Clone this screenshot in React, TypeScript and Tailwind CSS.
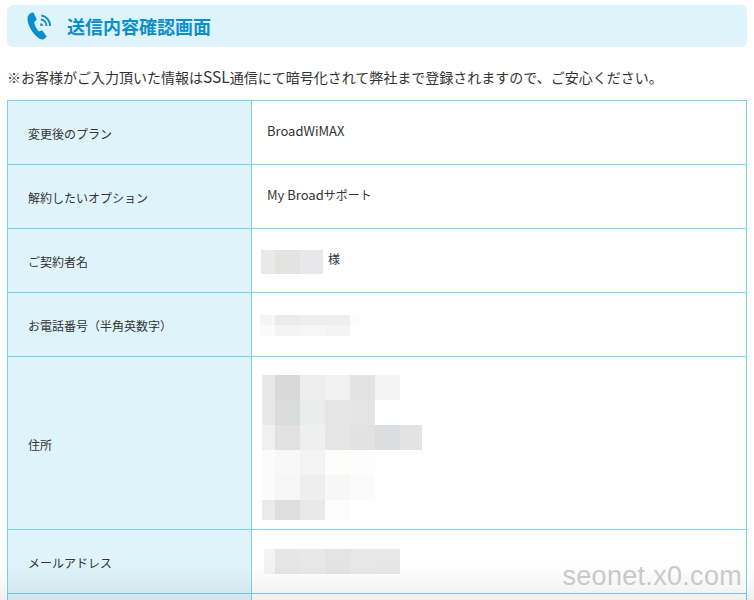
function Mosaic({ rows }: { rows: { h: number; cells: [number, string][] }[] }) {
  return (
    <div className="flex flex-col">
      {rows.map((r, i) => (
        <div key={i} className="flex" style={{ height: r.h }}>
          {r.cells.map(([w, c], j) => <div key={j} style={{ width: w, background: c }} />)}
        </div>
      ))}
    </div>
  );
}

function Row({ label, h, children }: { label: string; h: string; children: React.ReactNode }) {
  return (
    <div className={`flex border-b border-[#7ad2f0] ${h}`}>
      <div className="w-[244px] shrink-0 bg-[#dff3fb] border-r border-[#7ad2f0] flex items-center pl-5 pt-[3px] text-[12px] text-[#333]">{label}</div>
      <div className="flex-1 bg-white flex items-center text-[12px] text-[#333]">{children}</div>
    </div>
  );
}

export default function App() {
  return (
    <div className="relative w-[754px] h-[600px] overflow-hidden bg-white pt-[5px] px-[7px] font-['Noto_Sans_CJK_JP','Liberation_Sans',sans-serif]">
      <div className="h-[42px] rounded-[6px] bg-[#dff3fb] flex items-center pl-[20px]">
        <svg width="24" height="28" viewBox="0 0 24 28" fill="none">
          <path d="M0.5 6 C0.5 3.5 2.5 1.5 4.5 0.8 L6.3 0.3 L9.8 7.5 L7.3 10 C7 11.5 9 16.5 12 19.5 L15 18.2 L19.8 24.5 L17.5 26.8 C16 28 13.5 27.6 11.5 26 C5 21 0.2 12.5 0.5 6 Z" fill="#0a8fce" />
          <path d="M13.5 11 A3 3 0 0 1 16 14 L13.2 13.8 Z" fill="#0a8fce" />
          <path d="M13.8 7.5 A6.5 6.5 0 0 1 19.5 14 M14.3 3.5 A10 10 0 0 1 23 14" stroke="#0a8fce" strokeWidth="1.9" />
        </svg>
        <h1 className="ml-[16px] text-[18px] leading-[24px] font-bold text-[#0a8fce]">送信内容確認画面</h1>
      </div>
      <p className="mt-[21px] h-[32px] text-[14px] leading-[16px] text-[#333] whitespace-nowrap">※お客様がご入力頂いた情報は<span className="text-[15.5px]">SSL</span>通信にて暗号化されて弊社まで登録されますので、ご安心ください。</p>
      <div className="border border-b-0 border-[#7ad2f0]">
        <Row label="変更後のプラン" h="h-[64px]"><span className="ml-[15px] mb-[4px] text-[13px]">BroadWiMAX</span></Row>
        <Row label="解約したいオプション" h="h-[64px]"><span className="ml-[15px] mb-[4px]"><span className="text-[13px]">My Broad</span>サポート</span></Row>
        <Row label="ご契約者名" h="h-[64px]">
          <div className="ml-[9px] mt-[3px] flex items-center">
            <Mosaic rows={[{ h: 24, cells: [[14, "#e9e9e8"], [25, "#e3e3e1"], [23, "#e8e8ea"]] }]} />
            <span className="ml-[5px] mb-[6px]">様</span>
          </div>
        </Row>
        <Row label="お電話番号（半角英数字）" h="h-[64px]">
          <div className="ml-[8px] mt-[2px]">
            <Mosaic rows={[
              { h: 10, cells: [[15, "#f5f5f5"], [25, "#ebebeb"], [25, "#eeeeee"], [25, "#eeeeee"], [10, "#fcfcfc"]] },
              { h: 11, cells: [[15, "#fafafa"], [25, "#f4f4f4"], [25, "#f6f6f6"], [25, "#f3f3f3"]] },
            ]} />
          </div>
        </Row>
        <Row label="住所" h="h-[173px]">
          <div className="ml-[10px] mt-[9px]">
            <Mosaic rows={[
              { h: 25, cells: [[13, "#e8e8e7"], [25, "#d9d9db"], [25, "#eeeeee"], [25, "#f2f2f2"], [25, "#e3e3e3"], [25, "#f4f4f4"]] },
              { h: 25, cells: [[13, "#e8e8e6"], [25, "#dadbdd"], [25, "#ebeded"], [25, "#e6e6e6"], [25, "#e5e5e6"]] },
              { h: 25, cells: [[13, "#f0f0f0"], [25, "#e0e2e1"], [25, "#efefef"], [25, "#e6e6e6"], [25, "#e2e2e3"], [25, "#dcdddf"], [22, "#e3e3e3"]] },
              { h: 25, cells: [[13, "#fbfbfb"], [25, "#f8f8f8"], [25, "#f3f3f3"], [25, "#fdfdfb"], [25, "#fdfdfd"]] },
              { h: 25, cells: [[13, "#fbfbfb"], [25, "#f6f6f6"], [25, "#eeeeee"], [25, "#f7f7f7"], [25, "#fbfbfb"]] },
              { h: 20, cells: [[13, "#ebe9ea"], [25, "#dedede"], [25, "#e9e9e9"], [25, "#fcfcfc"]] },
            ]} />
          </div>
        </Row>
        <Row label="メールアドレス" h="h-[64px]">
          <div className="ml-[12px] mb-[1px]">
            <Mosaic rows={[{ h: 25, cells: [[11, "#f3f3f3"], [25, "#e6e6e6"], [25, "#e8e8e8"], [25, "#e4e4e4"], [25, "#e8e8e8"], [25, "#e7e7e7"]] }]} />
          </div>
        </Row>
        <Row label="" h="h-[64px]"><span /></Row>
      </div>
      <div className="absolute left-0 right-0 bottom-0 h-[36px] bg-gradient-to-b from-transparent to-[#0000000f]" />
      <div className="absolute right-[12px] bottom-[6px] font-['Liberation_Sans',sans-serif] text-[27px] leading-[36px] tracking-[0.3px] text-[#c9c9c9]">seonet.x0.com</div>
    </div>
  );
}
